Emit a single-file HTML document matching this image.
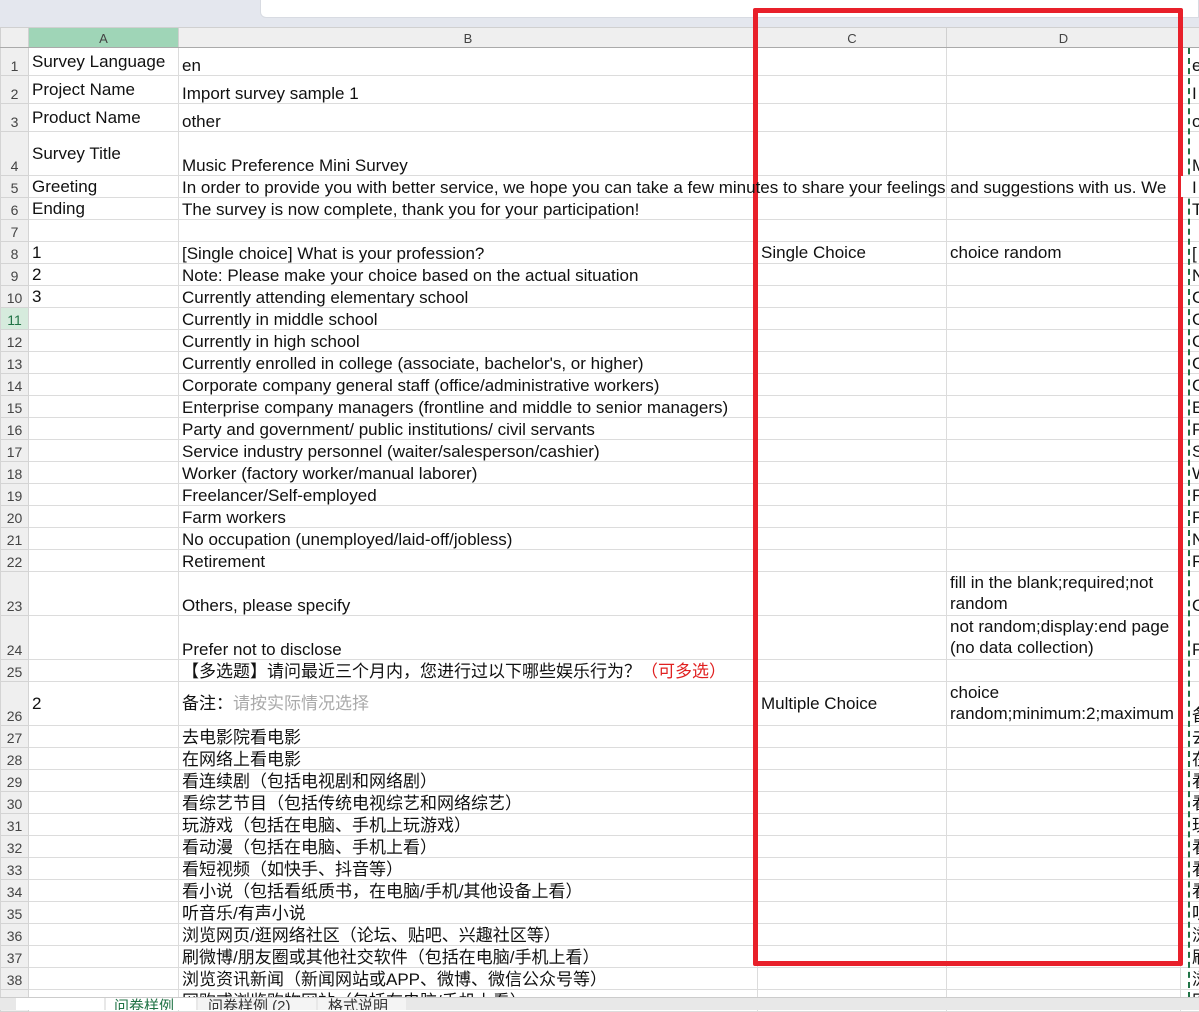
<!DOCTYPE html>
<html><head><meta charset="utf-8"><style>
*{margin:0;padding:0;box-sizing:border-box}
body{width:1199px;height:1010px;overflow:hidden;background:#fff;position:relative;font-family:"Liberation Sans","Noto Sans CJK SC",sans-serif;color:#111}
.top{position:absolute;left:0;top:0;width:1199px;height:27px;background:#e4e7ee}
.top .box{position:absolute;left:260px;top:0;width:939px;height:18px;background:#fff;border:1px solid #d8dbe2;border-top:none;border-radius:0 0 0 6px}
table{position:absolute;left:0;top:27px;width:1199px;border-collapse:collapse;table-layout:fixed;font-size:17px}
td{border:1px solid #dcdcdc;padding:0 3px;white-space:nowrap;overflow:hidden;line-height:19px;vertical-align:bottom}
td.e{padding-left:11px}
tr.h td{background:#efefef;color:#444;font-size:13px;text-align:center;height:20px;line-height:16px;border-color:#d0d0d0;border-bottom:1px solid #aaa}
td.n{background:#efefef;color:#444;font-size:14px;text-align:center;border-color:#d4d4d4;line-height:17px;padding:0}
td.a{vertical-align:middle}
td.c{vertical-align:middle}
td.d{vertical-align:top;white-space:normal;line-height:21px}
.red{position:absolute;left:753px;top:8px;width:430px;height:958px;border:5px solid #e8202a;border-radius:2px}
.dash{position:absolute;left:1188px;top:48px;height:950px;border-left:2px dashed #217346}
.tabs{position:absolute;left:0;top:997px;width:1199px;height:13px;background:#e8e8e8;border-top:1px solid #ccc;font-size:15px;overflow:hidden}
.tabs span{position:absolute;top:-2px;line-height:18px}
</style></head><body>
<div class="top"><div class="box"></div></div>
<table>
<colgroup><col style="width:28px"><col style="width:150px"><col style="width:579px"><col style="width:189px"><col style="width:234px"><col style="width:19px"></colgroup>
<tr class="h"><td style="background:#efefef"></td><td style="background:#9fd5b7">A</td><td>B</td><td>C</td><td>D</td><td></td></tr>
<tr style="height:28px"><td class="n">1</td><td class="a">Survey Language</td><td>en</td><td class="c"></td><td class="d"></td><td class="e">e</td></tr>
<tr style="height:28px"><td class="n">2</td><td class="a">Project Name</td><td>Import survey sample 1</td><td class="c"></td><td class="d"></td><td class="e">I</td></tr>
<tr style="height:28px"><td class="n">3</td><td class="a">Product Name</td><td>other</td><td class="c"></td><td class="d"></td><td class="e">o</td></tr>
<tr style="height:44px"><td class="n">4</td><td class="a">Survey Title</td><td>Music Preference Mini Survey</td><td class="c"></td><td class="d"></td><td class="e">M</td></tr>
<tr style="height:22px"><td class="n">5</td><td class="a">Greeting</td><td style="overflow:visible;position:relative;z-index:1">In order to provide you with better service, we hope you can take a few minutes to share your feelings and suggestions with us. We</td><td class="c"></td><td class="d"></td><td class="e" style="background:#fff;position:relative;z-index:2">I</td></tr>
<tr style="height:22px"><td class="n">6</td><td class="a">Ending</td><td>The survey is now complete, thank you for your participation!</td><td class="c"></td><td class="d"></td><td class="e">T</td></tr>
<tr style="height:22px"><td class="n">7</td><td></td><td></td><td></td><td></td><td></td></tr>
<tr style="height:22px"><td class="n">8</td><td class="a">1</td><td>[Single choice] What is your profession?</td><td class="c">Single Choice</td><td class="c">choice random</td><td class="e">[</td></tr>
<tr style="height:22px"><td class="n">9</td><td class="a">2</td><td>Note: Please make your choice based on the actual situation</td><td></td><td></td><td class="e">N</td></tr>
<tr style="height:22px"><td class="n">10</td><td class="a">3</td><td>Currently attending elementary school</td><td></td><td></td><td class="e">C</td></tr>
<tr style="height:22px"><td class="n" style="background:#d6ebdd;color:#217346">11</td><td></td><td>Currently in middle school</td><td></td><td></td><td class="e">C</td></tr>
<tr style="height:22px"><td class="n">12</td><td></td><td>Currently in high school</td><td></td><td></td><td class="e">C</td></tr>
<tr style="height:22px"><td class="n">13</td><td></td><td>Currently enrolled in college (associate, bachelor's, or higher)</td><td></td><td></td><td class="e">C</td></tr>
<tr style="height:22px"><td class="n">14</td><td></td><td>Corporate company general staff (office/administrative workers)</td><td></td><td></td><td class="e">C</td></tr>
<tr style="height:22px"><td class="n">15</td><td></td><td>Enterprise company managers (frontline and middle to senior managers)</td><td></td><td></td><td class="e">E</td></tr>
<tr style="height:22px"><td class="n">16</td><td></td><td>Party and government/ public institutions/ civil servants</td><td></td><td></td><td class="e">P</td></tr>
<tr style="height:22px"><td class="n">17</td><td></td><td>Service industry personnel (waiter/salesperson/cashier)</td><td></td><td></td><td class="e">S</td></tr>
<tr style="height:22px"><td class="n">18</td><td></td><td>Worker (factory worker/manual laborer)</td><td></td><td></td><td class="e">W</td></tr>
<tr style="height:22px"><td class="n">19</td><td></td><td>Freelancer/Self-employed</td><td></td><td></td><td class="e">F</td></tr>
<tr style="height:22px"><td class="n">20</td><td></td><td>Farm workers</td><td></td><td></td><td class="e">F</td></tr>
<tr style="height:22px"><td class="n">21</td><td></td><td>No occupation (unemployed/laid-off/jobless)</td><td></td><td></td><td class="e">N</td></tr>
<tr style="height:22px"><td class="n">22</td><td></td><td>Retirement</td><td></td><td></td><td class="e">R</td></tr>
<tr style="height:44px"><td class="n">23</td><td></td><td>Others, please specify</td><td></td><td class="d">fill in the blank;required;not random</td><td class="e">O</td></tr>
<tr style="height:44px"><td class="n">24</td><td></td><td>Prefer not to disclose</td><td></td><td class="d">not random;display:end page (no data collection)</td><td class="e">P</td></tr>
<tr style="height:22px"><td class="n">25</td><td></td><td>【多选题】请问最近三个月内，您进行过以下哪些娱乐行为？<span style="color:#e02020">（可多选）</span></td><td></td><td></td><td class="e">【</td></tr>
<tr style="height:44px"><td class="n">26</td><td class="a">2</td><td style="vertical-align:middle">备注：<span style="color:#aaa">请按实际情况选择</span></td><td class="c">Multiple Choice</td><td class="d" style="white-space:nowrap">choice<br>random;minimum:2;maximum</td><td class="e">备</td></tr>
<tr style="height:22px"><td class="n">27</td><td></td><td>去电影院看电影</td><td></td><td></td><td class="e">去</td></tr>
<tr style="height:22px"><td class="n">28</td><td></td><td>在网络上看电影</td><td></td><td></td><td class="e">在</td></tr>
<tr style="height:22px"><td class="n">29</td><td></td><td>看连续剧（包括电视剧和网络剧）</td><td></td><td></td><td class="e">看</td></tr>
<tr style="height:22px"><td class="n">30</td><td></td><td>看综艺节目（包括传统电视综艺和网络综艺）</td><td></td><td></td><td class="e">看</td></tr>
<tr style="height:22px"><td class="n">31</td><td></td><td>玩游戏（包括在电脑、手机上玩游戏）</td><td></td><td></td><td class="e">玩</td></tr>
<tr style="height:22px"><td class="n">32</td><td></td><td>看动漫（包括在电脑、手机上看）</td><td></td><td></td><td class="e">看</td></tr>
<tr style="height:22px"><td class="n">33</td><td></td><td>看短视频（如快手、抖音等）</td><td></td><td></td><td class="e">看</td></tr>
<tr style="height:22px"><td class="n">34</td><td></td><td>看小说（包括看纸质书，在电脑/手机/其他设备上看）</td><td></td><td></td><td class="e">看</td></tr>
<tr style="height:22px"><td class="n">35</td><td></td><td>听音乐/有声小说</td><td></td><td></td><td class="e">听</td></tr>
<tr style="height:22px"><td class="n">36</td><td></td><td>浏览网页/逛网络社区（论坛、贴吧、兴趣社区等）</td><td></td><td></td><td class="e">浏</td></tr>
<tr style="height:22px"><td class="n">37</td><td></td><td>刷微博/朋友圈或其他社交软件（包括在电脑/手机上看）</td><td></td><td></td><td class="e">刷</td></tr>
<tr style="height:22px"><td class="n">38</td><td></td><td>浏览资讯新闻（新闻网站或APP、微博、微信公众号等）</td><td></td><td></td><td class="e">浏</td></tr>
<tr style="height:22px"><td class="n">39</td><td></td><td>网购或浏览购物网站（包括在电脑/手机上看）</td><td></td><td></td><td class="e">网</td></tr>
</table>
<div class="dash"></div>
<div class="red"></div>
<div class="tabs">
<span style="left:16px;width:88px;height:14px;background:#fff;top:0"></span>
<span style="left:106px;width:90px;height:14px;background:#fff;top:0;color:#217346;padding-left:8px">问卷样例</span>
<span style="left:198px;width:118px;height:14px;background:#f4f4f4;top:0;padding-left:10px;color:#333">问卷样例 (2)</span>
<span style="left:318px;width:88px;height:14px;background:#f4f4f4;top:0;padding-left:10px;color:#333">格式说明</span>
</div>
</body></html>
